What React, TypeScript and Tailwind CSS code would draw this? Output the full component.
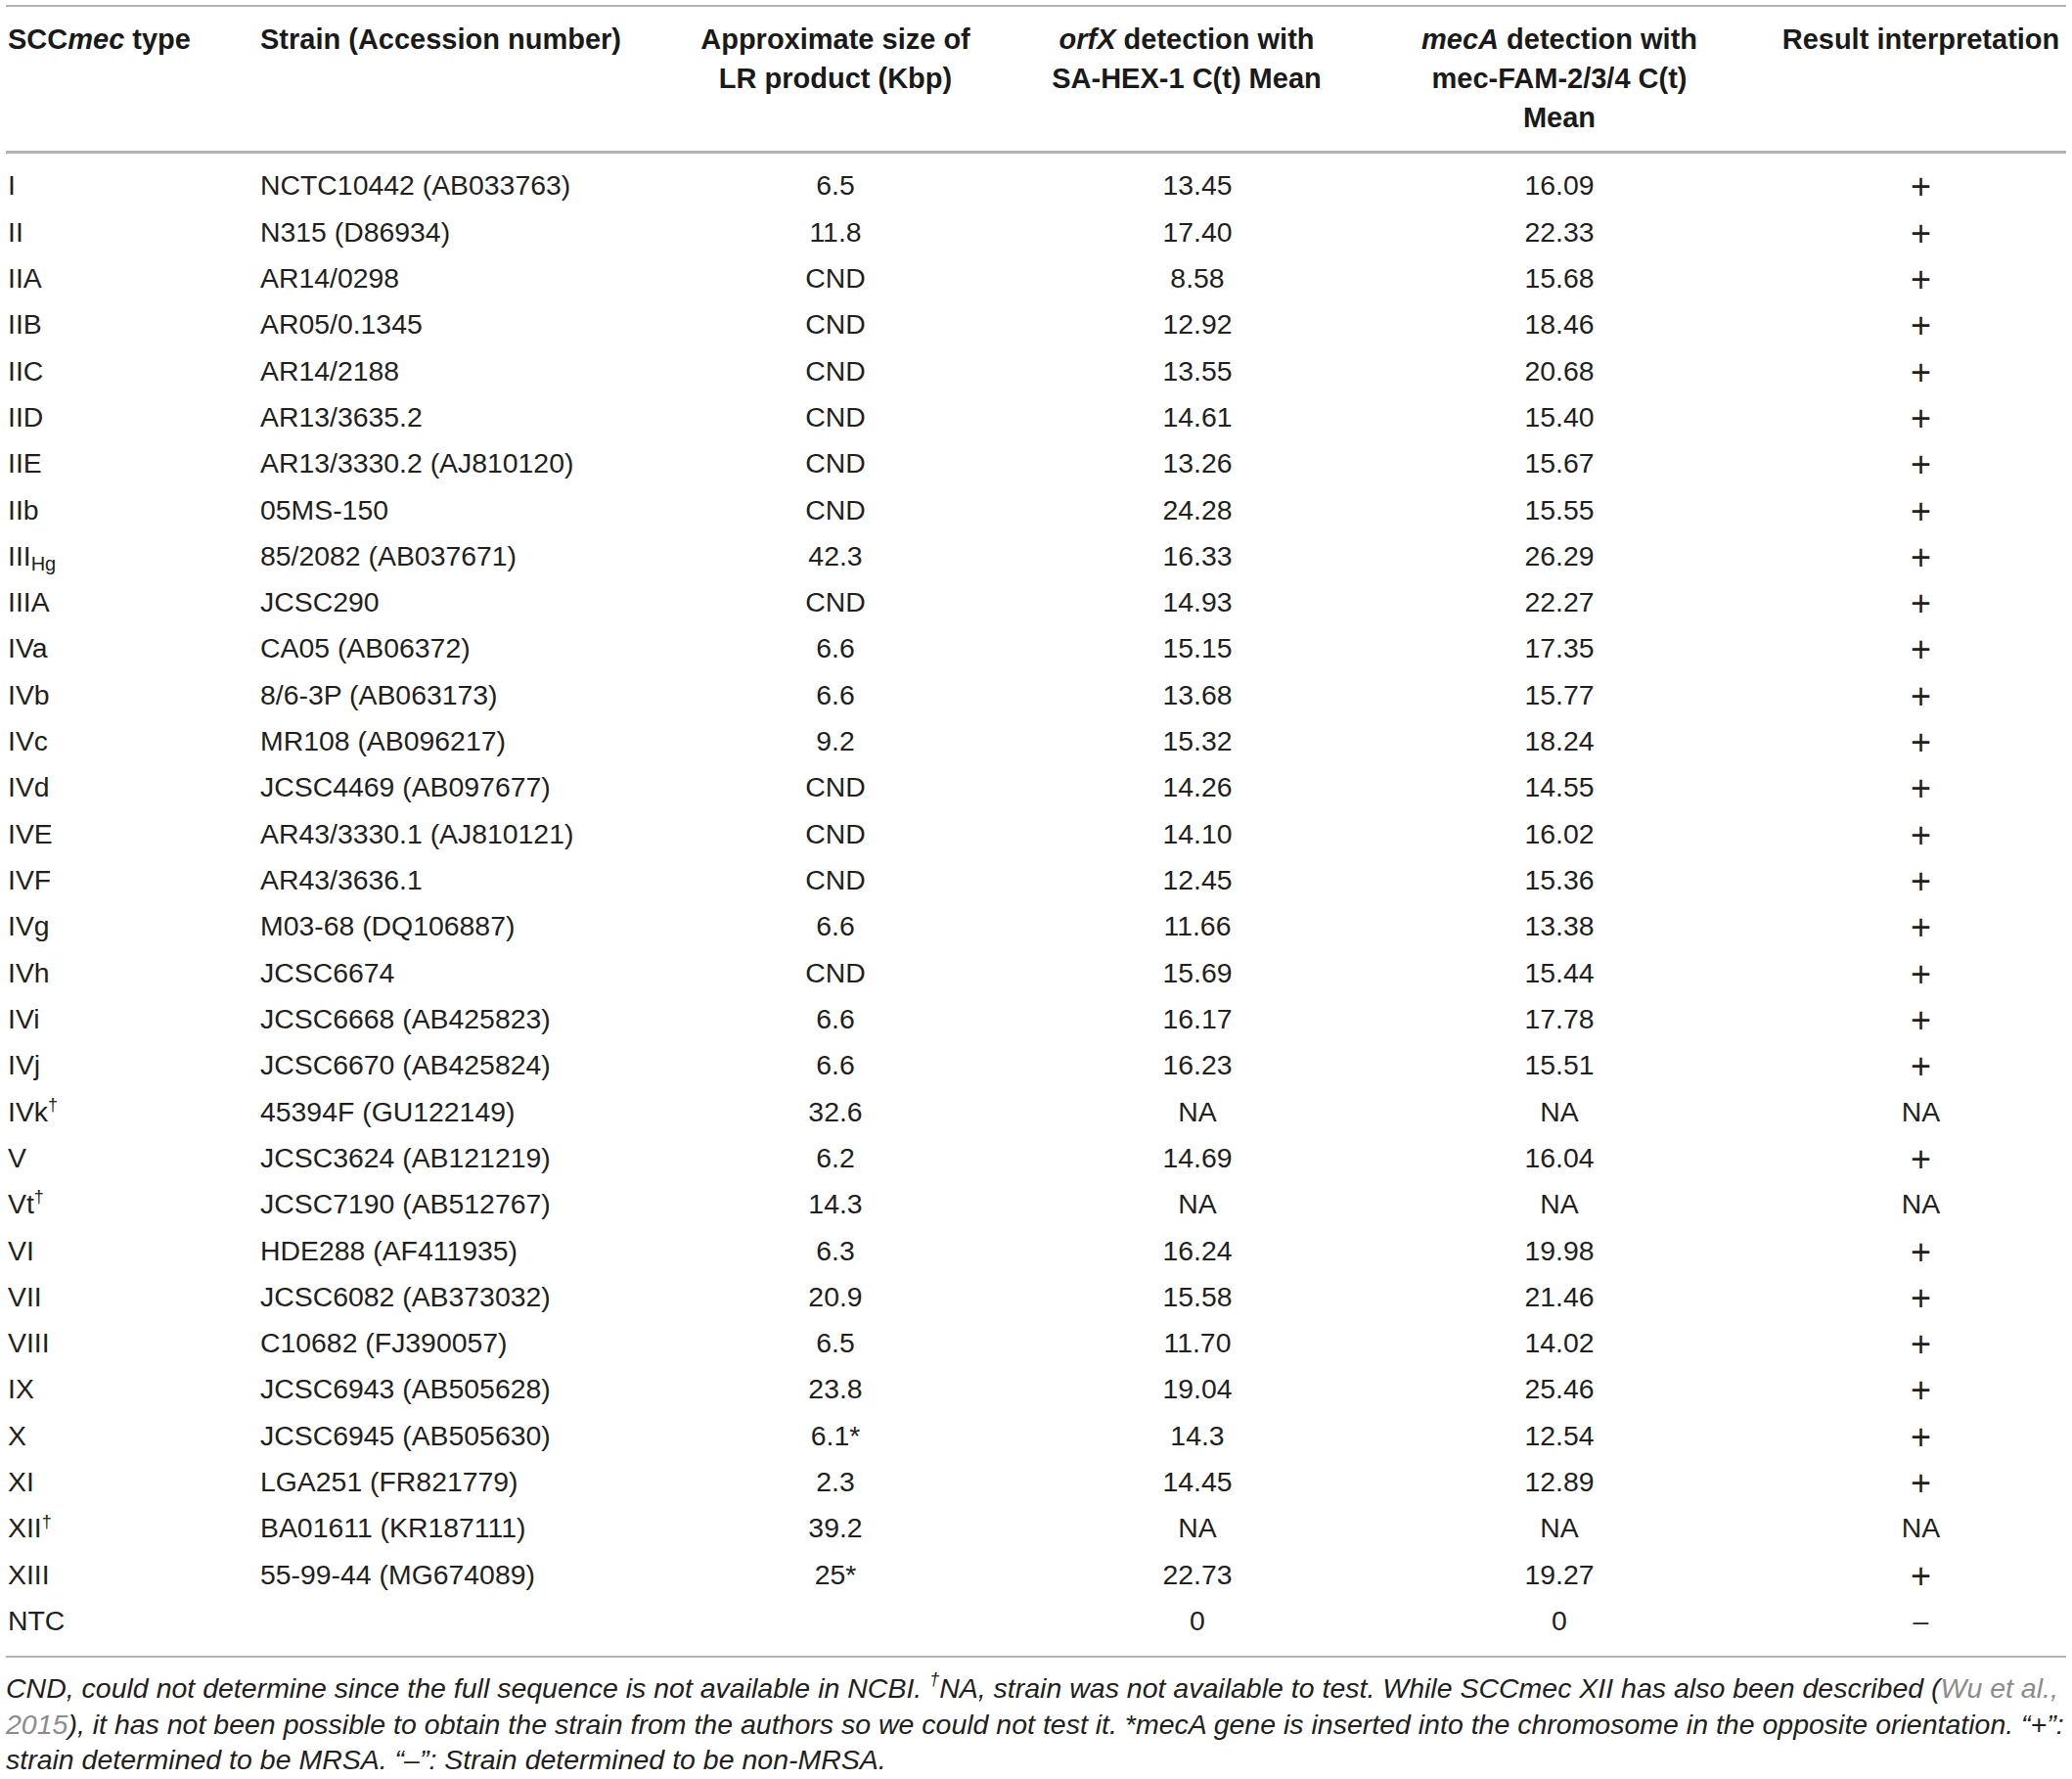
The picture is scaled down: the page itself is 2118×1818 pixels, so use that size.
import type { ReactNode } from "react";

type Row = [ReactNode, string, string, string, string, string];

const dagger = <sup className="text-[18px] -top-[0.6em]">†</sup>;

const rows: Row[] = [
  ["I", "NCTC10442 (AB033763)", "6.5", "13.45", "16.09", "+"],
  ["II", "N315 (D86934)", "11.8", "17.40", "22.33", "+"],
  ["IIA", "AR14/0298", "CND", "8.58", "15.68", "+"],
  ["IIB", "AR05/0.1345", "CND", "12.92", "18.46", "+"],
  ["IIC", "AR14/2188", "CND", "13.55", "20.68", "+"],
  ["IID", "AR13/3635.2", "CND", "14.61", "15.40", "+"],
  ["IIE", "AR13/3330.2 (AJ810120)", "CND", "13.26", "15.67", "+"],
  ["IIb", "05MS-150", "CND", "24.28", "15.55", "+"],
  [
    <>
      III<sub className="text-[20px]">Hg</sub>
    </>,
    "85/2082 (AB037671)",
    "42.3",
    "16.33",
    "26.29",
    "+",
  ],
  ["IIIA", "JCSC290", "CND", "14.93", "22.27", "+"],
  ["IVa", "CA05 (AB06372)", "6.6", "15.15", "17.35", "+"],
  ["IVb", "8/6-3P (AB063173)", "6.6", "13.68", "15.77", "+"],
  ["IVc", "MR108 (AB096217)", "9.2", "15.32", "18.24", "+"],
  ["IVd", "JCSC4469 (AB097677)", "CND", "14.26", "14.55", "+"],
  ["IVE", "AR43/3330.1 (AJ810121)", "CND", "14.10", "16.02", "+"],
  ["IVF", "AR43/3636.1", "CND", "12.45", "15.36", "+"],
  ["IVg", "M03-68 (DQ106887)", "6.6", "11.66", "13.38", "+"],
  ["IVh", "JCSC6674", "CND", "15.69", "15.44", "+"],
  ["IVi", "JCSC6668 (AB425823)", "6.6", "16.17", "17.78", "+"],
  ["IVj", "JCSC6670 (AB425824)", "6.6", "16.23", "15.51", "+"],
  [<>IVk{dagger}</>, "45394F (GU122149)", "32.6", "NA", "NA", "NA"],
  ["V", "JCSC3624 (AB121219)", "6.2", "14.69", "16.04", "+"],
  [<>Vt{dagger}</>, "JCSC7190 (AB512767)", "14.3", "NA", "NA", "NA"],
  ["VI", "HDE288 (AF411935)", "6.3", "16.24", "19.98", "+"],
  ["VII", "JCSC6082 (AB373032)", "20.9", "15.58", "21.46", "+"],
  ["VIII", "C10682 (FJ390057)", "6.5", "11.70", "14.02", "+"],
  ["IX", "JCSC6943 (AB505628)", "23.8", "19.04", "25.46", "+"],
  ["X", "JCSC6945 (AB505630)", "6.1*", "14.3", "12.54", "+"],
  ["XI", "LGA251 (FR821779)", "2.3", "14.45", "12.89", "+"],
  [<>XII{dagger}</>, "BA01611 (KR187111)", "39.2", "NA", "NA", "NA"],
  ["XIII", "55-99-44 (MG674089)", "25*", "22.73", "19.27", "+"],
  ["NTC", "", "", "0", "0", "–"],
];

const cols = "grid grid-cols-[258px_405px_370px_370px_370px_1fr]";

function Result({ value }: { value: string }) {
  if (value === "+")
    return <span className="inline-block translate-y-[4px] text-[36px] leading-none">+</span>;
  return <span>{value}</span>;
}

export default function App() {
  return (
    <div className="bg-white min-h-screen pt-[5px] font-['Liberation_Sans',Arial,sans-serif] text-[#231f20]">
      <div className="ml-[6px] w-[2106px]">
        <div
          className={`${cols} border-t-2 border-b-[3px] border-[#b2b2b2] pt-[13px] pb-[14px] text-[29px] leading-[40px] font-bold text-[#1a1a1a]`}
        >
          <div className="pl-[2px]">
            SCC<i>mec</i> type
          </div>
          <div className="pl-[2px]">Strain (Accession number)</div>
          <div className="text-center">
            Approximate size of
            <br />
            LR product (Kbp)
          </div>
          <div className="text-center pr-[22px]">
            <i>orfX</i> detection with
            <br />
            SA-HEX-1 C(t) Mean
          </div>
          <div className="text-center">
            <i>mecA</i> detection with
            <br />
            mec-FAM-2/3/4 C(t)
            <br />
            Mean
          </div>
          <div className="text-center pl-[36px]">Result interpretation</div>
        </div>

        <div className="border-b-2 border-[#b2b2b2] pt-[9px] pb-[12px] text-[28.4px]">
          {rows.map((r, i) => (
            <div key={i} className={`${cols} h-[47.32px] items-center`}>
              <div className="pl-[2px] whitespace-nowrap">{r[0]}</div>
              <div className="pl-[2px] whitespace-nowrap">{r[1]}</div>
              <div className="text-center">{r[2]}</div>
              <div className="text-center">{r[3]}</div>
              <div className="text-center">{r[4]}</div>
              <div className="text-center pl-[36px]">
                <Result value={r[5]} />
              </div>
            </div>
          ))}
        </div>

        <p className="mt-[13px] text-[28.5px] leading-[36.6px] italic whitespace-nowrap text-[#231f20]">
          CND, could not determine since the full sequence is not available in
          NCBI. <sup className="text-[18px] -top-[0.7em]">†</sup>NA, strain was
          not available to test. While SCCmec XII has also been described (
          <span className="text-[#8c8c8c]">Wu et al.,</span>
          <br />
          <span className="text-[#8c8c8c]">2015</span>), it has not been
          possible to obtain the strain from the authors so we could not test
          it. *mecA gene is inserted into the chromosome in the opposite
          orientation. “+”:
          <br />
          strain determined to be MRSA. “–”: Strain determined to be non-MRSA.
        </p>
      </div>
    </div>
  );
}
